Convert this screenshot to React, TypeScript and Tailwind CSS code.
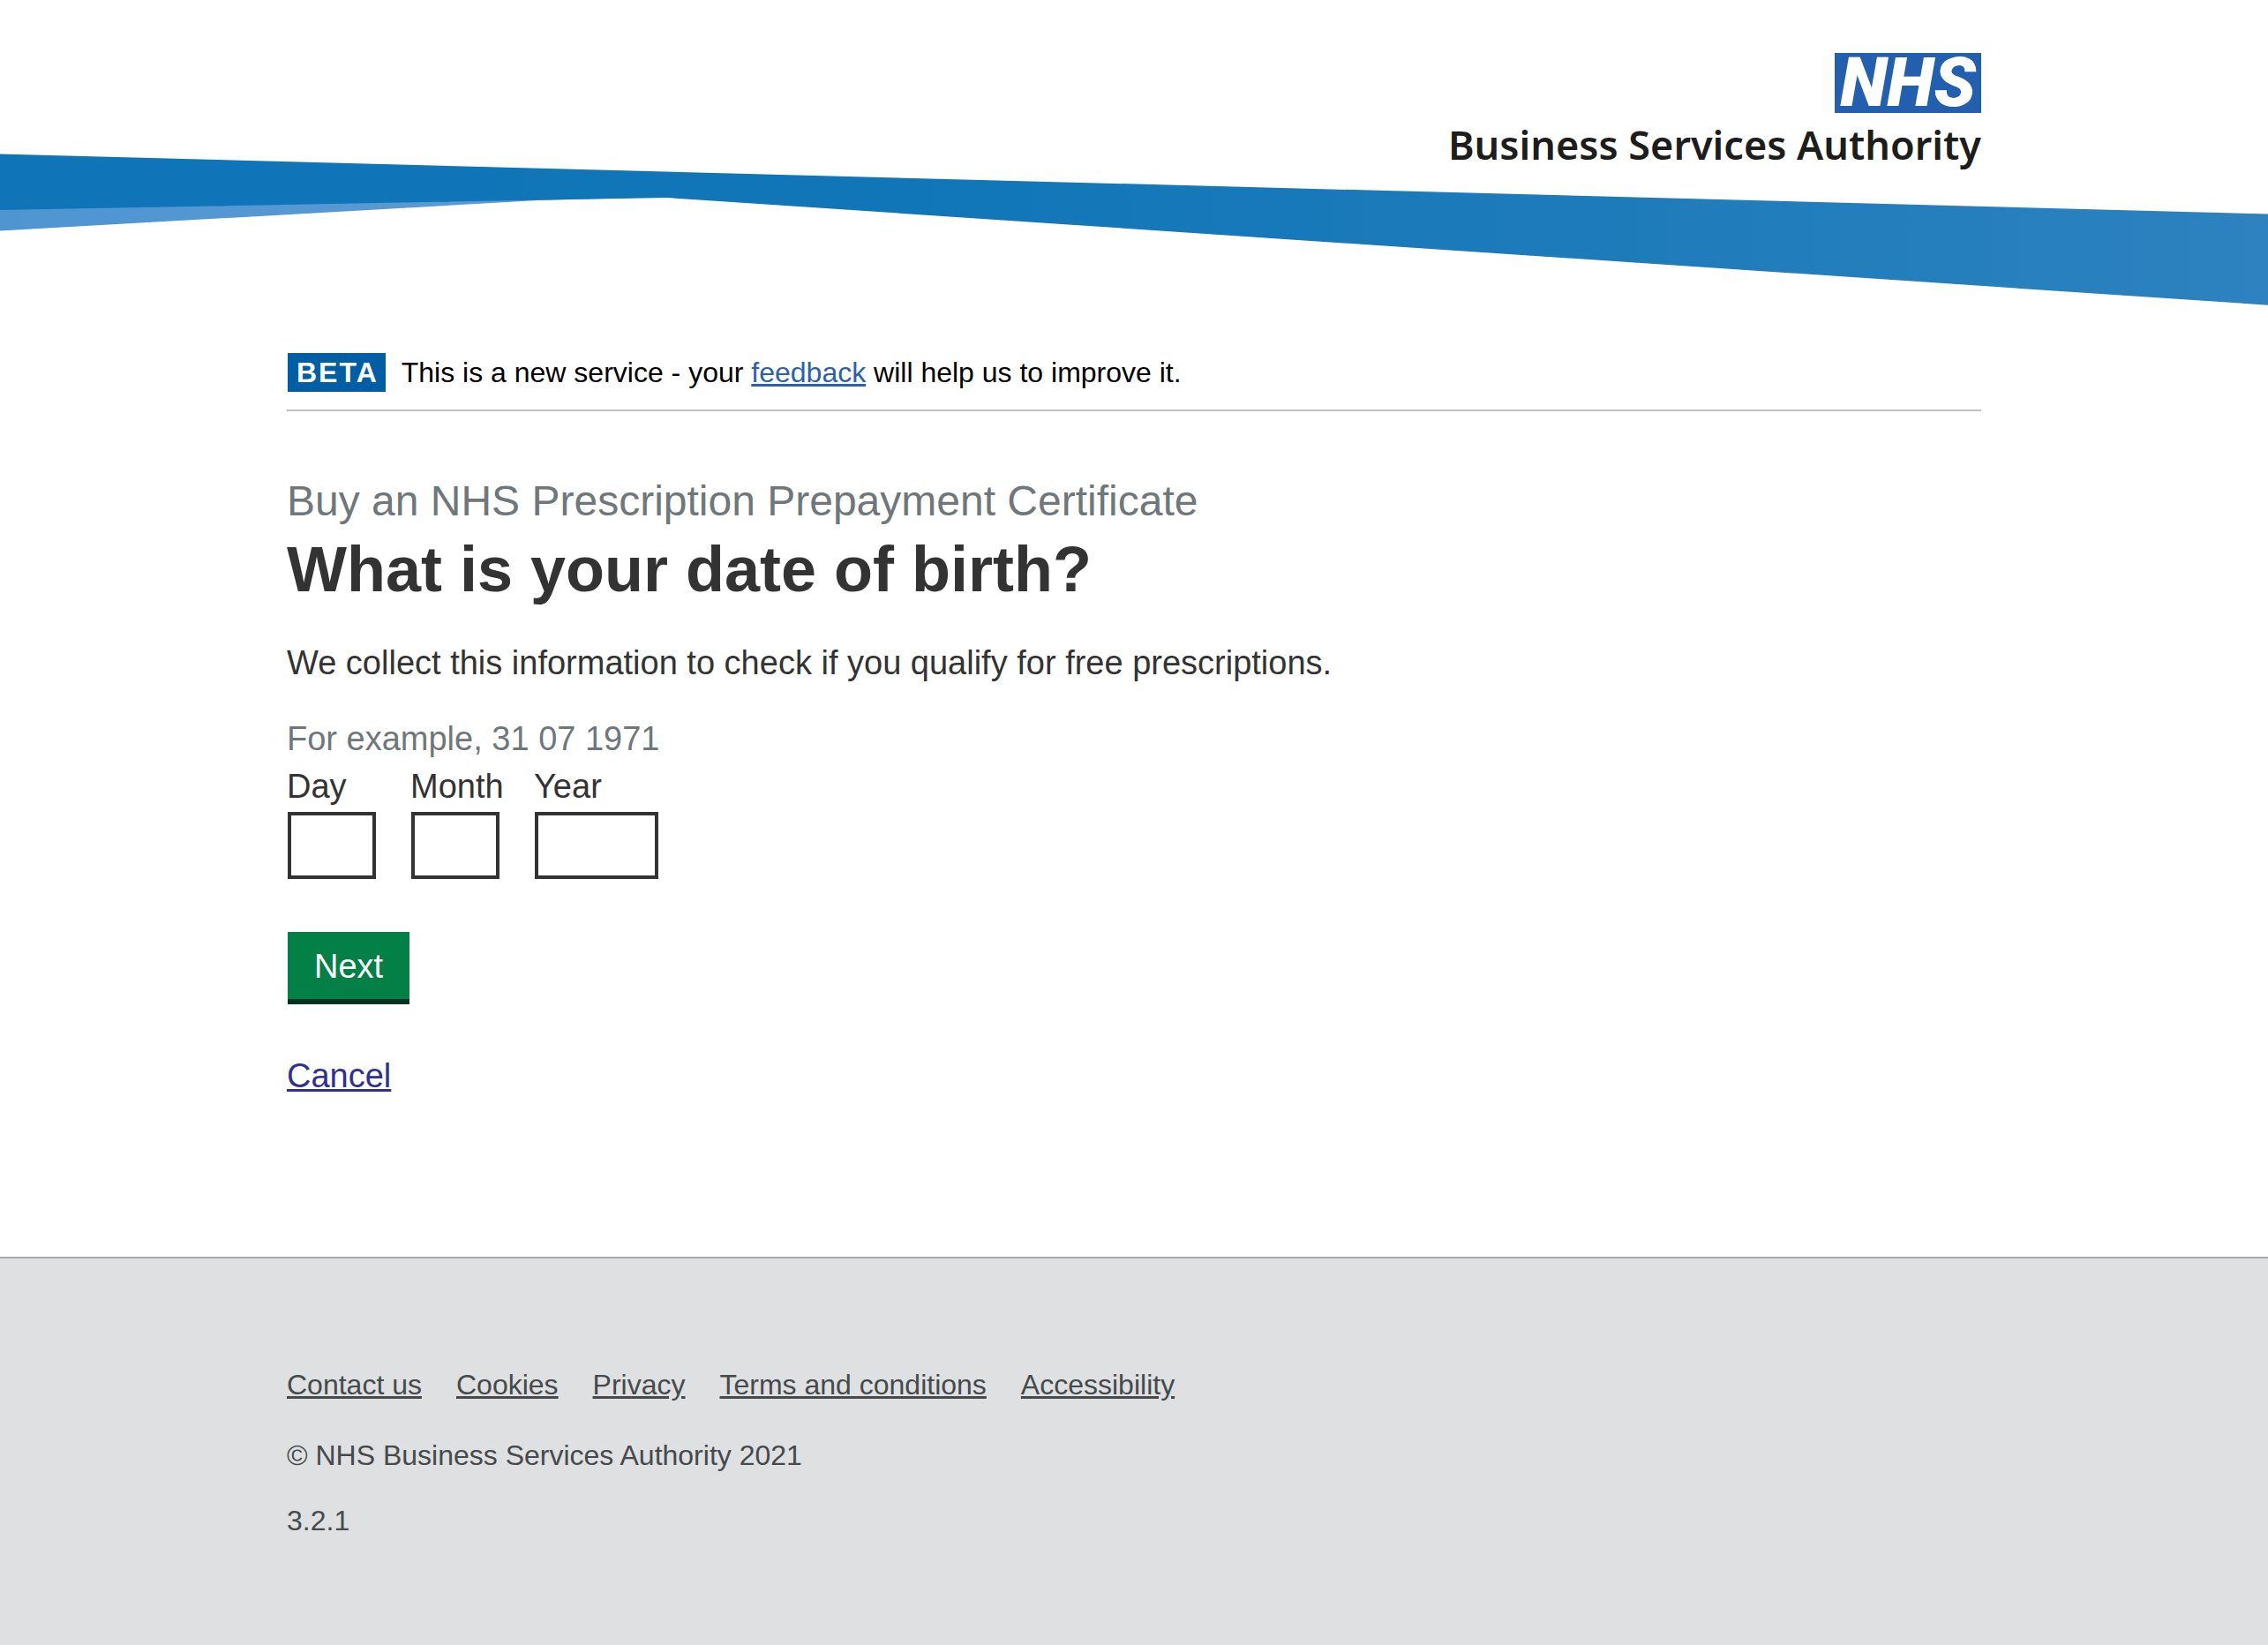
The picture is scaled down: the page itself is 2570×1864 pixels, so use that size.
import React from "react";

const footerLinks = ["Contact us", "Cookies", "Privacy", "Terms and conditions", "Accessibility"];

const dateFields = [
  { id: "dob-day", label: "Day", box: "w-[100px]" },
  { id: "dob-month", label: "Month", box: "w-[100px]" },
  { id: "dob-year", label: "Year", box: "w-[140px]" },
];

function Logo() {
  return (
    <a href="#" className="flex flex-col items-end">
      <span className="flex h-[68px] w-[166px] items-center justify-center bg-[#225fae] font-['Roboto',sans-serif] text-[78px] leading-[68px] font-black text-white italic">
        NHS
      </span>
      <span className="mt-2 font-['Noto_Sans',sans-serif] text-[45px] leading-[56px] font-semibold whitespace-nowrap text-[#1d1d1b]">
        Business Services Authority
      </span>
    </a>
  );
}

function Swoosh() {
  return (
    <svg
      className="-mt-[18px] block h-[172px] w-full"
      viewBox="0 0 2570 172"
      preserveAspectRatio="none"
      aria-hidden="true"
    >
      <defs>
        <linearGradient id="band" x1="0" x2="1" y1="0" y2="0">
          <stop offset="0" stopColor="#0f75b8" />
          <stop offset="0.4" stopColor="#1076b8" />
          <stop offset="0.75" stopColor="#207cbb" />
          <stop offset="1" stopColor="#2d82bf" />
        </linearGradient>
        <linearGradient id="fold" x1="0" x2="1" y1="0" y2="0">
          <stop offset="0" stopColor="#4e95d2" />
          <stop offset="1" stopColor="#5f9bd5" />
        </linearGradient>
      </defs>
      <polygon points="0,60 0,87.5 610,53 756,49" fill="url(#fold)" />
      <polygon points="0,0.5 2570,68.5 2570,171.7 756,50 0,64" fill="url(#band)" />
    </svg>
  );
}

export default function App() {
  return (
    <div className="flex min-h-screen flex-col bg-white font-['Liberation_Sans',Arial,sans-serif] text-[#333333]">
      <header>
        <div className="mx-auto flex w-full max-w-[1920px] justify-end pt-[60px]">
          <Logo />
        </div>
        <Swoosh />
      </header>

      <main className="mx-auto w-full max-w-[1920px] pt-[54px] pb-[180px]">
        <div className="border-b-2 border-[#bfc1c3] pb-5 text-[32px] leading-[44px] text-black">
          <div className="flex items-center">
            <strong className="mr-[18px] ml-px bg-[#005ea5] pr-2 pl-[10px] font-bold tracking-[2px] text-white">
              BETA
            </strong>
            <p>
              This is a new service - your{" "}
              <a href="#" className="text-[#2a60ae] underline">
                feedback
              </a>{" "}
              will help us to improve it.
            </p>
          </div>
        </div>

        <form onSubmit={(e) => e.preventDefault()}>
          <h1 className="pt-[68px] text-[72px] leading-[86px] font-bold">
            <span className="block text-[48px] leading-[68px] font-normal text-[#6f777b]">
              Buy an NHS Prescription Prepayment Certificate
            </span>
            What is your date of birth?
          </h1>
          <p className="mt-[38px] text-[38px] leading-[50px]">
            We collect this information to check if you qualify for free prescriptions.
          </p>

          <fieldset className="mt-9 text-[38px] leading-[50px]" aria-describedby="dob-hint">
            <p id="dob-hint" className="text-[#6f777b]">
              For example, 31 07 1971
            </p>
            <div className="mt-1 flex">
              {dateFields.map((f) => (
                <div key={f.id} className="w-[140px]">
                  <label htmlFor={f.id} className="block">
                    {f.label}
                  </label>
                  <input
                    id={f.id}
                    type="text"
                    inputMode="numeric"
                    className={`mt-1 ml-px block h-[76px] border-4 border-[#333333] bg-white px-2 ${f.box}`}
                  />
                </div>
              ))}
            </div>
          </fieldset>

          <button
            type="submit"
            className="mt-[60px] ml-px block h-[76px] bg-[#028046] px-[30px] pt-0.5 text-[38px] leading-[50px] text-white shadow-[0_6px_0_#003420]"
          >
            Next
          </button>
          <p className="mt-[62px] text-[38px] leading-[50px]">
            <a href="#" className="text-[#2e3191] underline">
              Cancel
            </a>
          </p>
        </form>
      </main>

      <footer className="grow border-t-2 border-[#a9abab] bg-[#dee0e2] text-[32px] leading-[40px] text-[#454a4a]">
        <div className="mx-auto w-full max-w-[1920px] pt-[123px] pb-[80px]">
          <nav>
            <ul className="flex flex-wrap gap-x-[39px]">
              {footerLinks.map((text) => (
                <li key={text}>
                  <a href="#" className="underline">
                    {text}
                  </a>
                </li>
              ))}
            </ul>
          </nav>
          <p className="mt-10">© NHS Business Services Authority 2021</p>
          <p className="mt-[34px]">3.2.1</p>
        </div>
      </footer>
    </div>
  );
}
